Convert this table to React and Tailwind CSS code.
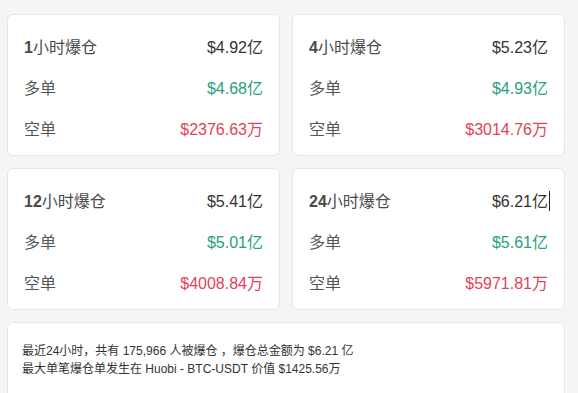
const stats = [
    { period: "1", total: "$4.92亿", long: "$4.68亿", short: "$2376.63万" },
    { period: "4", total: "$5.23亿", long: "$4.93亿", short: "$3014.76万" },
    { period: "12", total: "$5.41亿", long: "$5.01亿", short: "$4008.84万" },
    { period: "24", total: "$6.21亿", long: "$5.61亿", short: "$5971.81万", caret: true },
];

const StatCard = ({ item }) => (
    <div className="bg-white border border-[#e6e6e6] rounded-md pt-[19px] pb-[11px] px-4 flex flex-col gap-[13px] text-[16px]">
        <div className="flex justify-between items-center h-[28px]">
            <span className="text-[#4a4a4a]">
                <span className="font-bold">{item.period}</span>小时爆仓
            </span>
            <span className="text-[#333] relative">
                {item.total}
                {item.caret && <span className="absolute right-[-2px] top-[1px] w-px h-[20px] bg-[#222]"></span>}
            </span>
        </div>
        <div className="flex justify-between items-center h-[28px]">
            <span className="text-[#555]">多单</span>
            <span className="text-[#27a17c]">{item.long}</span>
        </div>
        <div className="flex justify-between items-center h-[28px]">
            <span className="text-[#555]">空单</span>
            <span className="text-[#e0435a]">{item.short}</span>
        </div>
    </div>
);

const App = () => {
    return (
        <div className="h-[393px] overflow-hidden bg-[#f5f5f5] pl-[7px] pr-[13px] pt-[14px] font-['Liberation_Sans','Noto_Sans_CJK_SC',sans-serif]">
            <div className="grid grid-cols-[273px_273px] gap-[12px]">
                {stats.map((s) => (
                    <StatCard key={s.period} item={s} />
                ))}
                <div className="col-span-2 bg-white border border-[#e6e6e6] rounded-md h-[100px] pt-[19px] px-[14px] text-[12px] leading-[18px] text-[#333]">
                    <p>最近24小时，共有 175,966 人被爆仓 ，爆仓总金额为 $6.21 亿</p>
                    <p>最大单笔爆仓单发生在 Huobi - BTC-USDT 价值 $1425.56万</p>
                </div>
            </div>
        </div>
    );
};

export default App;
